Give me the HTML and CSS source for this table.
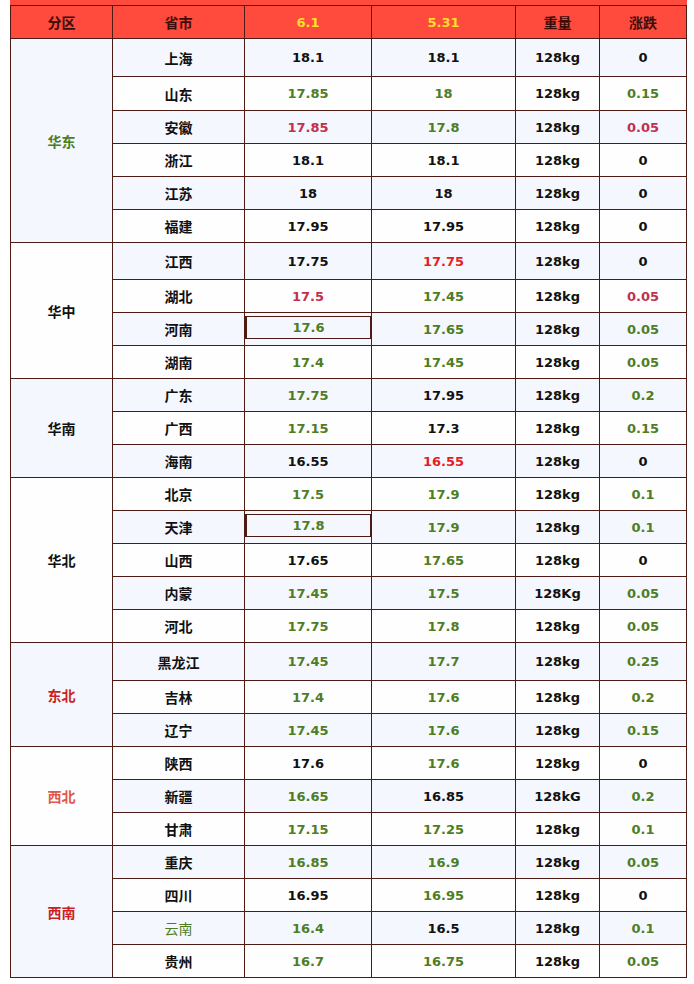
FILE: index.html
```html
<!DOCTYPE html>
<html>
<head>
<meta charset="utf-8">
<link rel="stylesheet" href="styles.css">
</head>
<body>
<div class="wrap">
<div class="topband"></div>
<table class="price">
<colgroup>
<col class="c1"><col class="c2"><col class="c3"><col class="c4"><col class="c5"><col class="c6">
</colgroup>
<thead>
<tr class="hd"><th>分区</th><th>省市</th><th class="yl">6.1</th><th class="yl">5.31</th><th>重量</th><th>涨跌</th></tr>
</thead>
<tbody>
<tr class="b h38"><td rowspan="6" class="reg b g">华东</td><td class="pv">上海</td><td>18.1</td><td>18.1</td><td>128kg</td><td>0</td></tr>
<tr class="w h34"><td class="pv">山东</td><td class="g">17.85</td><td class="g">18</td><td>128kg</td><td class="g">0.15</td></tr>
<tr class="b h33"><td class="pv">安徽</td><td class="cr">17.85</td><td class="g">17.8</td><td>128kg</td><td class="cr">0.05</td></tr>
<tr class="w h33"><td class="pv">浙江</td><td>18.1</td><td>18.1</td><td>128kg</td><td>0</td></tr>
<tr class="b h33"><td class="pv">江苏</td><td>18</td><td>18</td><td>128kg</td><td>0</td></tr>
<tr class="w h33"><td class="pv">福建</td><td>17.95</td><td>17.95</td><td>128kg</td><td>0</td></tr>

<tr class="b h37"><td rowspan="4" class="reg w">华中</td><td class="pv">江西</td><td>17.75</td><td class="rd">17.75</td><td>128kg</td><td>0</td></tr>
<tr class="w h33"><td class="pv">湖北</td><td class="cr">17.5</td><td class="g">17.45</td><td>128kg</td><td class="cr">0.05</td></tr>
<tr class="b h33"><td class="pv">河南</td><td class="g boxed"><div class="box">17.6</div></td><td class="g">17.65</td><td>128kg</td><td class="g">0.05</td></tr>
<tr class="w h33"><td class="pv">湖南</td><td class="g">17.4</td><td class="g">17.45</td><td>128kg</td><td class="g">0.05</td></tr>

<tr class="b h33"><td rowspan="3" class="reg b">华南</td><td class="pv">广东</td><td class="g">17.75</td><td>17.95</td><td>128kg</td><td class="g">0.2</td></tr>
<tr class="w h33"><td class="pv">广西</td><td class="g">17.15</td><td>17.3</td><td>128kg</td><td class="g">0.15</td></tr>
<tr class="b h33"><td class="pv">海南</td><td>16.55</td><td class="rd">16.55</td><td>128kg</td><td>0</td></tr>

<tr class="w h33"><td rowspan="5" class="reg w">华北</td><td class="pv">北京</td><td class="g">17.5</td><td class="g">17.9</td><td>128kg</td><td class="g">0.1</td></tr>
<tr class="b h33"><td class="pv">天津</td><td class="g boxed"><div class="box">17.8</div></td><td class="g">17.9</td><td>128kg</td><td class="g">0.1</td></tr>
<tr class="w h33"><td class="pv">山西</td><td>17.65</td><td class="g">17.65</td><td>128kg</td><td>0</td></tr>
<tr class="b h33"><td class="pv">内蒙</td><td class="g">17.45</td><td class="g">17.5</td><td>128Kg</td><td class="g">0.05</td></tr>
<tr class="w h33"><td class="pv">河北</td><td class="g">17.75</td><td class="g">17.8</td><td>128kg</td><td class="g">0.05</td></tr>

<tr class="b h38"><td rowspan="3" class="reg b rdk">东北</td><td class="pv">黑龙江</td><td class="g">17.45</td><td class="g">17.7</td><td>128kg</td><td class="g">0.25</td></tr>
<tr class="w h33"><td class="pv">吉林</td><td class="g">17.4</td><td class="g">17.6</td><td>128kg</td><td class="g">0.2</td></tr>
<tr class="b h33"><td class="pv">辽宁</td><td class="g">17.45</td><td class="g">17.6</td><td>128kg</td><td class="g">0.15</td></tr>

<tr class="w h33"><td rowspan="3" class="reg w sal">西北</td><td class="pv">陕西</td><td>17.6</td><td class="g">17.6</td><td>128kg</td><td>0</td></tr>
<tr class="b h33"><td class="pv">新疆</td><td class="g">16.65</td><td>16.85</td><td>128kG</td><td class="g">0.2</td></tr>
<tr class="w h33"><td class="pv">甘肃</td><td class="g">17.15</td><td class="g">17.25</td><td>128kg</td><td class="g">0.1</td></tr>

<tr class="b h33"><td rowspan="4" class="reg b rdk">西南</td><td class="pv">重庆</td><td class="g">16.85</td><td class="g">16.9</td><td>128kg</td><td class="g">0.05</td></tr>
<tr class="w h33"><td class="pv">四川</td><td>16.95</td><td class="g">16.95</td><td>128kg</td><td>0</td></tr>
<tr class="b h33"><td class="pv lg">云南</td><td class="g">16.4</td><td>16.5</td><td>128kg</td><td class="g">0.1</td></tr>
<tr class="w h33"><td class="pv">贵州</td><td class="g">16.7</td><td class="g">16.75</td><td>128kg</td><td class="g">0.05</td></tr>
</tbody>
</table>
</div>
</body>
</html>
```

FILE: styles.css
```css
html, body {
  margin: 0;
  padding: 0;
  background: #ffffff;
}
.wrap {
  padding-left: 10px;
  width: 677px;
}
.topband {
  height: 5px;
  width: 677px;
  background: #fe4b3d;
}
.price {
  border-collapse: collapse;
  table-layout: fixed;
  width: 677px;
  font-family: "DejaVu Sans", "Noto Sans CJK SC", sans-serif;
  font-weight: bold;
  font-size: 13px;
  color: #111111;
}
.c1 { width: 102px; }
.c2 { width: 132px; }
.c3 { width: 127px; }
.c4 { width: 144px; }
.c5 { width: 84px; }
.c6 { width: 87px; }
.price th, .price td {
  border: 1px solid #4e1a14;
  text-align: center;
  vertical-align: middle;
  padding: 0;
}
.hd th {
  background: #fe4b3d;
  height: 32px;
  font-family: "Noto Sans CJK SC", sans-serif;
  font-size: 14px;
  font-weight: bold;
  color: #3c0c0a;
}
.hd th.yl {
  font-family: "DejaVu Sans", sans-serif;
  font-size: 13px;
  color: #ffdf2a;
}
tr.b td { background: #f4f7fe; }
tr.w td { background: #fefefe; }
td.reg.b { background: #f4f7fe; }
td.reg.w { background: #fefefe; }
.h38 td { height: 37px; }
.h37 td { height: 36px; }
.h34 td { height: 33px; }
.h33 td { height: 32px; }
td.reg { height: auto !important; }
.pv, .reg {
  font-family: "Noto Sans CJK SC", sans-serif;
  font-size: 14px;
  font-weight: bold;
  color: #111111;
}
.pv.lg { color: #4e7d23; font-weight: normal; }
.g { color: #4e7d23; }
td.reg.g { color: #4e7d23; }
.cr { color: #c2304c; }
.rd { color: #e41f1f; }
td.reg.rdk { color: #cc1f1f; }
td.reg.sal { color: #e0584a; }
td.boxed { padding: 0; }
.box {
  margin: 3px 0 6px 0;
  height: 21px;
  line-height: 21px;
  border: 1px solid #4e1a14;
  border-left-width: 2px;
}
```
